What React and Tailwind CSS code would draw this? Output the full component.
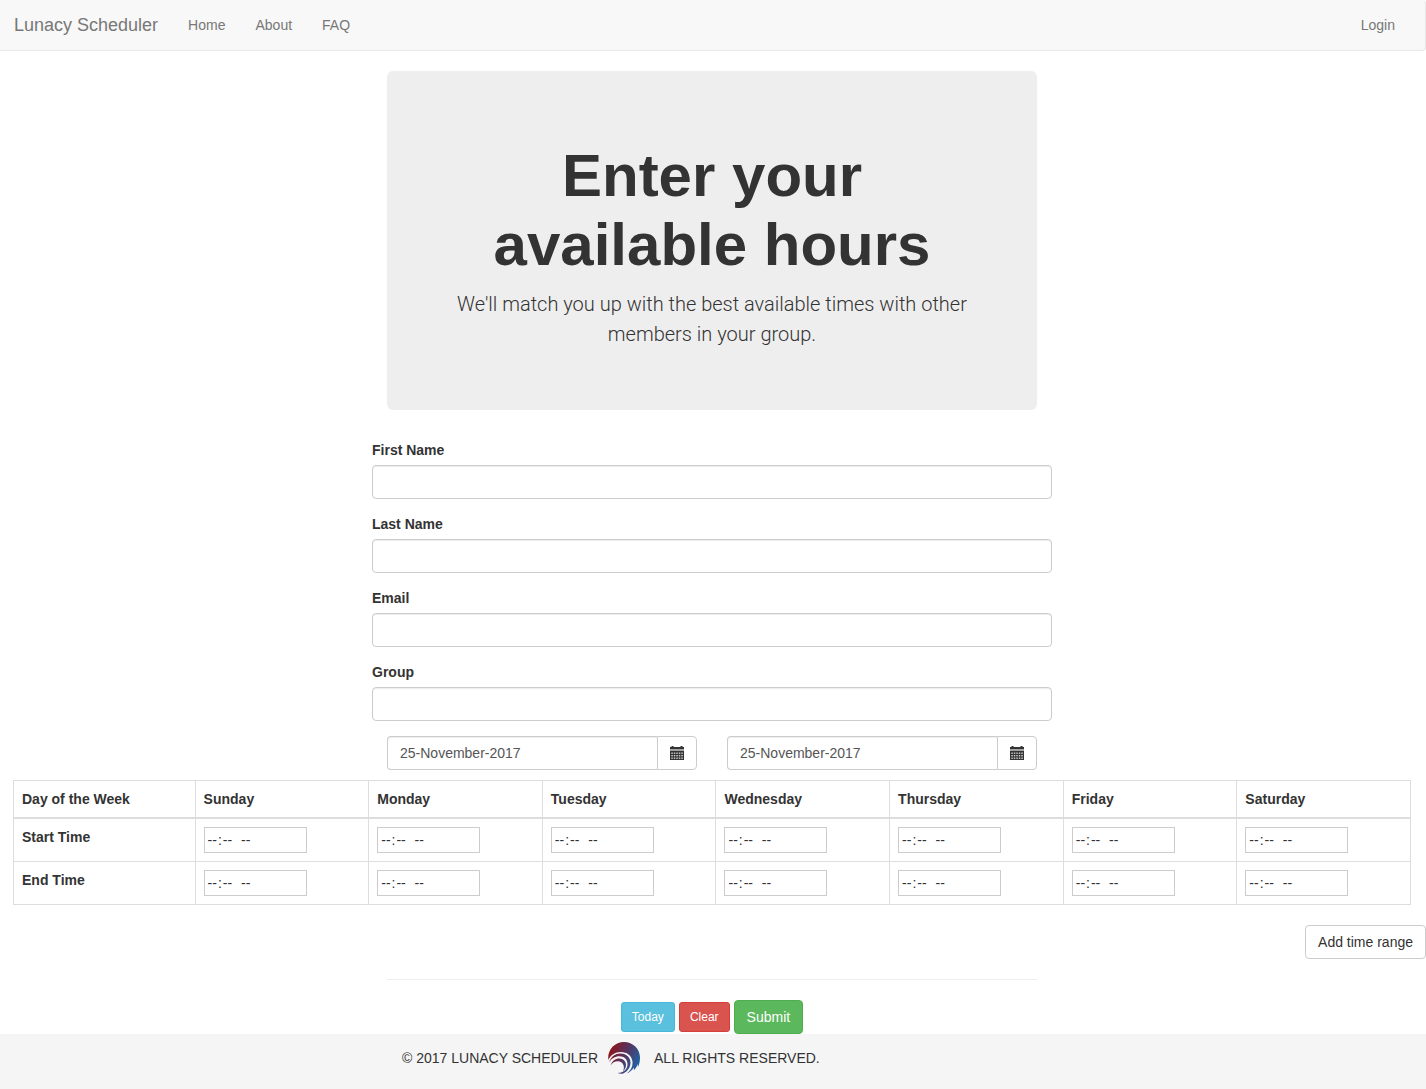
import React from "react";

const days = ["Sunday", "Monday", "Tuesday", "Wednesday", "Thursday", "Friday", "Saturday"];
const fields = [
  { id: "first-name", label: "First Name", type: "text" },
  { id: "last-name", label: "Last Name", type: "text" },
  { id: "email", label: "Email", type: "email" },
  { id: "group", label: "Group", type: "text" },
];
const rows = ["Start Time", "End Time"];

function CalendarIcon() {
  return (
    <svg width="14" height="14" viewBox="0 0 14 14" fill="#333" aria-hidden="true">
      <path d="M0 3V1h1.500V0h2v1h7V0h2v1H14v2z" />
      <path d="M0 3h14v2H0z" opacity=".45" />
      <path d="M0 5h14v9H0z" />
      <g fill="#fff" opacity=".75">
        {[6.5, 9, 11.5].map((y) =>
          [1.3, 3.8, 6.3, 8.8, 11.3].map((x) => <rect key={x + "-" + y} x={x} y={y} width="1.5" height="1.4" />)
        )}
      </g>
    </svg>
  );
}

function Logo() {
  return (
    <svg className="mr-3.5 ml-2.5" width="32" height="32" viewBox="0 0 32 32" role="img" aria-label="Lunacy Scheduler">
      <defs>
        <linearGradient id="wave" x1="2" y1="8" x2="30" y2="22" gradientUnits="userSpaceOnUse">
          <stop offset="0" stopColor="#8f151c" />
          <stop offset="0.5" stopColor="#553461" />
          <stop offset="1" stopColor="#2262a2" />
        </linearGradient>
      </defs>
      <path fill="url(#wave)" d="M.3 18C-.8 8 6.500 0 16 0c9 0 16 7 16 15.500c0 3.500-.6 6.500-2 9.500l-.3-3c-.8 2.500-2 4.500-3.700 6.200l-.2-2.700c-1.800 2.800-4 4.700-7 6c4.500-3.500 6.500-8 5.500-13C23.200 13.500 19 10 13 10C7 10 2.500 13 .3 18z" />
      <path fill="url(#wave)" d="M1 20.500C3 14.500 7.500 11.300 12.800 11.500C18.500 11.800 22.700 15.500 22.500 21c-.2 5-3.500 9-8 10.800c-2 .2-3.500-.2-5-.8c6.500-.2 10.300-4 10-9.500c-.3-4.500-3.500-7.300-8-7.300C7 14.200 3.200 16.500 1 20.500z" />
      <path fill="url(#wave)" d="M2.500 23.500c1.700-4.700 5-7.200 9-7c4.200 .3 6.800 3.200 6.500 6.800c-.1 2.500-1.200 4.500-3 5.700c.9-2 1.200-3.800 .5-5.800c-.9-2.600-3-3.900-5.600-3.900C6.700 19.300 4.300 20.800 2.500 23.500z" />
    </svg>
  );
}

function DatePicker({ label }) {
  return (
    <div className="flex h-[34px] flex-1">
      <input
        type="text"
        aria-label={label}
        defaultValue="25-November-2017"
        className="min-w-0 flex-1 rounded-l border border-r-0 border-[#ccc] bg-white px-3 text-sm text-[#555] shadow-[inset_0_1px_1px_rgba(0,0,0,0.075)]"
      />
      <button
        type="button"
        aria-label={"Choose " + label.toLowerCase()}
        className="flex w-10 items-center justify-center rounded-r border border-[#ccc] bg-white"
      >
        <CalendarIcon />
      </button>
    </div>
  );
}

export default function App() {
  return (
    <div className="flex min-h-screen flex-col bg-white font-['Helvetica_Neue','Liberation_Sans',sans-serif] text-sm leading-5 text-[#333]">
      <nav className="flex h-[51px] items-center rounded-r border-r border-b border-[#e7e7e7] bg-[#f8f8f8] pr-[30px] pl-3.5 text-[#777]">
        <a href="#top" className="mr-[30px] text-lg leading-5">Lunacy Scheduler</a>
        <div className="flex flex-1 gap-[30px]">
          <a href="#home">Home</a>
          <a href="#about">About</a>
          <a href="#faq">FAQ</a>
        </div>
        <a href="#login">Login</a>
      </nav>

      <form onSubmit={(e) => e.preventDefault()}>
        <div className="mx-auto max-w-[682px] pt-5 pr-0.5">
          <header className="mx-[15px] mb-[30px] rounded-md bg-[#eee] px-15 pt-[70px] pb-[61px] text-center">
            <h1 className="text-[60px] leading-[69px] font-bold">
              Enter your
              <br />
              available hours
            </h1>
            <p className="mt-2.5 font-['Roboto',sans-serif] text-[20px] leading-[30px] font-light">
              We'll match you up with the best available times with other members in your group.
            </p>
          </header>

          {fields.map((f) => (
            <div key={f.id} className="mb-[15px]">
              <label htmlFor={f.id} className="mb-[5px] block font-bold">{f.label}</label>
              <input
                id={f.id}
                type={f.type}
                className="block h-[34px] w-full rounded border border-[#ccc] bg-white px-3 shadow-[inset_0_1px_1px_rgba(0,0,0,0.075)]"
              />
            </div>
          ))}

          <div className="mx-[15px] mb-2.5 flex gap-[30px]">
            <DatePicker label="Start date" />
            <DatePicker label="End date" />
          </div>
        </div>

        <div className="mb-5 pr-[15px] pl-[13px]">
          <table className="w-full table-fixed border-collapse text-left">
            <thead>
              <tr>
                <th className="h-[37px] w-[13%] border border-b-2 border-[#ddd] px-2">Day of the Week</th>
                {days.map((d) => (
                  <th key={d} className="border border-b-2 border-[#ddd] px-2">{d}</th>
                ))}
              </tr>
            </thead>
            <tbody>
              {rows.map((r) => (
                <tr key={r}>
                  <th className="h-[43px] border border-[#ddd] px-2 pt-2 align-top">{r}</th>
                  {days.map((d) => (
                    <td key={d} className="border border-[#ddd] p-2 align-top">
                      <input
                        type="time"
                        aria-label={d + " " + r.toLowerCase()}
                        className="block h-[26px] w-[103px] border border-[#ccc] bg-white px-0.5 [&::-webkit-calendar-picker-indicator]:hidden [&::-webkit-datetime-edit-ampm-field]:ml-1"
                      />
                    </td>
                  ))}
                </tr>
              ))}
            </tbody>
          </table>
        </div>

        <div className="flex justify-end">
          <button type="button" className="h-[34px] rounded border border-[#ccc] bg-white px-3">Add time range</button>
        </div>

        <div className="mx-auto max-w-[682px] pr-0.5">
          <hr className="mx-[15px] my-5 border-[#eee]" />
          <div className="flex items-center justify-center gap-1">
            <button type="button" className="h-[30px] rounded-[3px] border border-[#46b8da] bg-[#5bc0de] px-2.5 text-xs text-white">Today</button>
            <button type="reset" className="h-[30px] rounded-[3px] border border-[#d43f3a] bg-[#d9534f] px-2.5 text-xs text-white">Clear</button>
            <button type="submit" className="h-[34px] rounded border border-[#4cae4c] bg-[#5cb85c] px-3 text-white">Submit</button>
          </div>
        </div>
      </form>

      <footer className="flex-1 bg-[#f5f5f5]">
        <div className="mx-auto flex max-w-[682px] items-center px-[30px] pt-2 pb-3.5">
          <span>© 2017 LUNACY SCHEDULER</span>
          <Logo />
          <span>ALL RIGHTS RESERVED.</span>
        </div>
      </footer>
    </div>
  );
}
